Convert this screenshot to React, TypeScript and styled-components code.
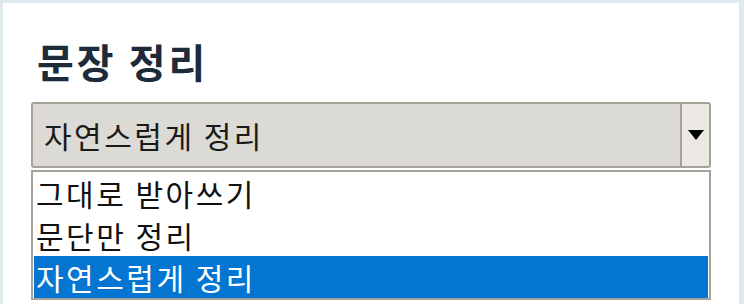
import React, { useState } from "react";
import styled, { createGlobalStyle } from "styled-components";

const GlobalStyle = createGlobalStyle`
  html, body {
    margin: 0;
    padding: 0;
    background: #dfe9ee;
  }
  body {
    font-family: "Noto Sans CJK KR", "Noto Sans", sans-serif;
  }
`;

/* cartão branco */
const Card = styled.div`
  margin: 3px 5px 0 3px;
  height: 301px;
  background: #ffffff;
  padding: 0 28px;
  box-sizing: border-box;
  overflow: hidden;
`;

const Title = styled.h1`
  margin: 0;
  padding-top: 31px;
  font-size: 40px;
  line-height: 54px;
  font-weight: 700;
  letter-spacing: 3px;
  color: #1d2b3b;
  padding-left: 6px;
  margin-bottom: 14px;
`;

/* caixa do select fechado */
const SelectBox = styled.div`
  display: flex;
  height: 66px;
  box-sizing: border-box;
  border: 2px solid #a6a29a;
  border-radius: 3px;
  background: #dcdad5;
`;

const SelectValue = styled.div`
  flex: 1;
  display: flex;
  align-items: center;
  padding-left: 11px;
  font-size: 30px;
  letter-spacing: 2.5px;
  color: #1a1a1a;
`;

const ArrowButton = styled.div`
  width: 27px;
  border-left: 2px solid #a6a29a;
  background: #ece9e4;
  display: flex;
  align-items: center;
  justify-content: center;
`;

/* lista aberta */
const List = styled.ul`
  list-style: none;
  margin: 2px 0 0 0;
  padding: 0 1px;
  border: 2px solid #a6a29a;
  background: #ffffff;
  box-sizing: border-box;
`;

const Item = styled.li<{ $selected?: boolean }>`
  height: 42px;
  line-height: 42px;
  padding-left: 2px;
  font-size: 30px;
  letter-spacing: 2.5px;
  color: ${(p) => (p.$selected ? "#ffffff" : "#111111")};
  background: ${(p) => (p.$selected ? "#0575d2" : "transparent")};
  white-space: nowrap;
`;

const options = ["그대로 받아쓰기", "문단만 정리", "자연스럽게 정리"];

export default function App() {
  const [value] = useState(options[2]);
  return (
    <>
      <GlobalStyle />
      <Card>
        <Title>문장 정리</Title>
        <SelectBox>
          <SelectValue>{value}</SelectValue>
          <ArrowButton>
            <svg width="16" height="10" viewBox="0 0 16 10">
              <polygon points="0,0 16,0 8,10" fill="#000" />
            </svg>
          </ArrowButton>
        </SelectBox>
        <List>
          {options.map((o) => (
            <Item key={o} $selected={o === value}>
              {o}
            </Item>
          ))}
        </List>
      </Card>
    </>
  );
}
